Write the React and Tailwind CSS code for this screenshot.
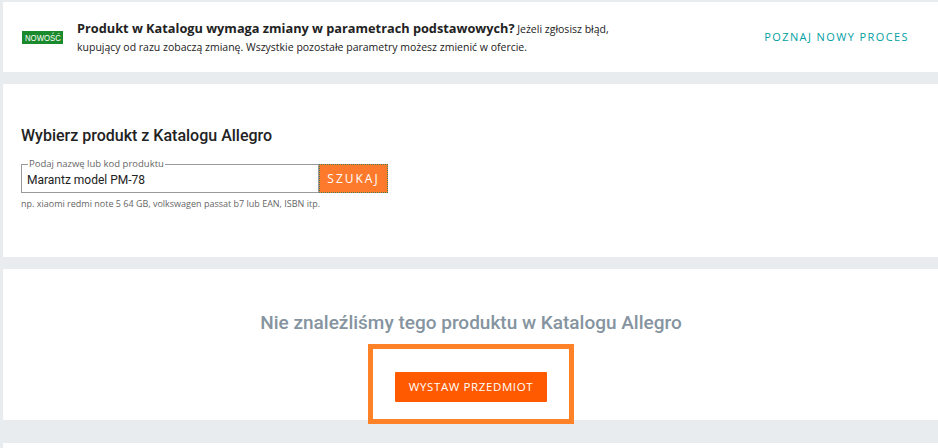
import React, { useState } from 'react';

const openSans = { fontFamily: '"Open Sans", "Liberation Sans", sans-serif' };

function NewProcessBanner() {
  return (
    <div className="flex h-[70px] items-center bg-white pl-[19px] pr-[30px]">
      <span className="flex h-[13px] w-[41px] items-center justify-center bg-[#1a8a2c]">
        <span className="inline-block scale-x-[0.82] pt-[1px] font-['Liberation_Sans',sans-serif] text-[9.5px] leading-[12px] text-white">
          NOWOŚĆ
        </span>
      </span>
      <p className="ml-[14px] w-[545px] text-[10.5px] leading-[18px] text-[#222]" style={openSans}>
        <span className="text-[12.75px] font-bold">Produkt w Katalogu wymaga zmiany w parametrach podstawowych?</span>{' '}
        Jeżeli zgłosisz błąd, kupujący od razu zobaczą zmianę. Wszystkie pozostałe parametry możesz zmienić w ofercie.
      </p>
      <a href="#" className="ml-auto text-[11px] tracking-[1.4px] text-[#00a0a3]" style={openSans}>
        POZNAJ NOWY PROCES
      </a>
    </div>
  );
}

function CatalogSearch() {
  const [query, setQuery] = useState('Marantz model PM-78');

  return (
    <div className="h-[173px] bg-white px-[18px] pt-[42px]">
      <h2 className="font-['Roboto',sans-serif] text-[16px] font-medium leading-[20px] text-[#222]">
        Wybierz produkt z Katalogu Allegro
      </h2>
      <div className="mt-3 flex items-end">
        <fieldset className="w-[298px] border border-[#9a9a9a] px-[5px]">
          <legend className="ml-[1px] px-[1px] text-[9.5px] leading-[12px] text-[#666]" style={openSans}>
            Podaj nazwę lub kod produktu
          </legend>
          <input
            value={query}
            onChange={(e) => setQuery(e.target.value)}
            className="block h-[22px] w-full pb-[3px] font-['Roboto',sans-serif] text-[12px] text-[#222] outline-none"
          />
        </fieldset>
        <button
          className="h-[29px] w-[69px] bg-[#fd7a2d] text-[12px] tracking-[2px] text-white outline-1 -outline-offset-1 outline-dotted outline-[#3f7f5a]"
          style={openSans}
        >
          SZUKAJ
        </button>
      </div>
      <p className="mt-[5px] text-[9px] leading-[12px] text-[#666]" style={openSans}>
        np. xiaomi redmi note 5 64 GB, volkswagen passat b7 lub EAN, ISBN itp.
      </p>
    </div>
  );
}

function NotFound() {
  return (
    <div className="flex flex-col items-center bg-white pt-[42px] pb-[18px]">
      <h2 className="font-['Roboto',sans-serif] text-[19px] font-medium leading-[24px] text-[#8594a0]">
        Nie znaleźliśmy tego produktu w Katalogu Allegro
      </h2>
      <div className="relative mt-[37px]">
        <button
          className="h-[30px] w-[152px] rounded-[1px] bg-[#ff5a00] text-[11.5px] tracking-[0.6px] text-white"
          style={openSans}
        >
          WYSTAW PRZEDMIOT
        </button>
        {/* highlight frame */}
        <div className="pointer-events-none absolute -top-[28px] -bottom-[22px] -left-[27px] -right-[27px] border-[5px] border-[#ff8229]" />
      </div>
    </div>
  );
}

export default function App() {
  return (
    <div className="h-[448px] w-full overflow-hidden bg-[#e9ecef]">
      <div className="flex w-[939px] flex-col pl-[3px] pt-[2px]">
        <NewProcessBanner />
        <div className="mt-3">
          <CatalogSearch />
        </div>
        <div className="mt-3">
          <NotFound />
        </div>
        <div className="mt-[23px] h-[40px] bg-white" />
      </div>
    </div>
  );
}
